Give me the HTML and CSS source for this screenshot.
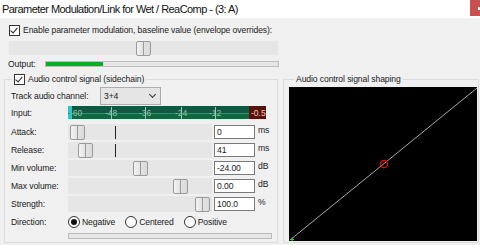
FILE: index.html
```html
<!DOCTYPE html>
<html lang="en">
<head>
    <meta charset="UTF-8">
    <title>Parameter Modulation/Link for Wet / ReaComp - (3: A)</title>
    <link rel="stylesheet" href="styles.css">
</head>
<body>

    <div class="titlebar">
        <span class="title">Parameter Modulation/Link for Wet / ReaComp - (3: A)</span>
        <span class="close"><i></i></span>
    </div>

    <div class="top">
        <label class="check-row">
            <span class="cbox checked"></span>
            Enable parameter modulation, baseline value (envelope overrides):
        </label>
        <div class="hslider big">
            <span class="thumb" style="margin-left: 127px"></span>
        </div>
        <div class="output-row">
            <span>Output:</span>
            <div class="bar"><div class="fill" style="width: 57px"></div></div>
        </div>
    </div>

    <div class="groups">
        <fieldset class="group left">
            <legend>
                <label class="check-row">
                    <span class="cbox checked"></span>
                    Audio control signal (sidechain)
                </label>
            </legend>

            <div class="row channel">
                <span class="lbl">Track audio channel:</span>
                <div class="combo">3+4<span class="chev"></span></div>
            </div>

            <div class="row input">
                <span class="lbl">Input:</span>
                <svg class="meter" width="198" height="13" viewBox="0 0 198 13">
                    <rect x="0" y="0" width="198" height="13" fill="#0b5a42"/>
                    <rect x="0" y="7" width="181" height="6" fill="#0e6a3e"/>
                    <rect x="0" y="0" width="4" height="13" fill="#2fc6c6"/>
                    <rect x="181" y="0" width="17" height="13" fill="#5c1208"/>
                    <line x1="0" y1="7.5" x2="181" y2="7.5" stroke="#3c8c6c" stroke-width="1"/>
                    <g stroke="#9fc9b6" stroke-width="1">
                        <line x1="43.5" y1="1" x2="43.5" y2="13"/>
                        <line x1="77.5" y1="1" x2="77.5" y2="13"/>
                        <line x1="113.5" y1="1" x2="113.5" y2="13"/>
                        <line x1="147.5" y1="1" x2="147.5" y2="13"/>
                    </g>
                    <g class="scale">
                        <text x="2" y="10">-60</text>
                        <text x="37" y="10">-48</text>
                        <text x="71" y="10">-36</text>
                        <text x="107" y="10">-24</text>
                        <text x="141" y="10">-12</text>
                        <text x="183" y="10" class="peak">-0.5</text>
                    </g>
                </svg>
            </div>

            <div class="row slider-row">
                <span class="lbl">Attack:</span>
                <div class="hslider">
                    <span class="thumb" style="margin-left: 2px"></span>
                    <span class="mark"></span>
                </div>
                <div class="edit">0</div>
                <span class="unit">ms</span>
            </div>
            <div class="row slider-row">
                <span class="lbl">Release:</span>
                <div class="hslider">
                    <span class="thumb" style="margin-left: 10px"></span>
                    <span class="mark"></span>
                </div>
                <div class="edit">41</div>
                <span class="unit">ms</span>
            </div>
            <div class="row slider-row">
                <span class="lbl">Min volume:</span>
                <div class="hslider">
                    <span class="thumb" style="margin-left: 65px"></span>
                </div>
                <div class="edit">-24.00</div>
                <span class="unit">dB</span>
            </div>
            <div class="row slider-row">
                <span class="lbl">Max volume:</span>
                <div class="hslider">
                    <span class="thumb" style="margin-left: 105px"></span>
                </div>
                <div class="edit">0.00</div>
                <span class="unit">dB</span>
            </div>
            <div class="row slider-row">
                <span class="lbl">Strength:</span>
                <div class="hslider">
                    <span class="thumb" style="margin-left: 127px"></span>
                </div>
                <div class="edit">100.0</div>
                <span class="unit">%</span>
            </div>

            <div class="row direction">
                <span class="lbl">Direction:</span>
                <label class="radio"><span class="dot on"></span>Negative</label>
                <label class="radio"><span class="dot"></span>Centered</label>
                <label class="radio"><span class="dot"></span>Positive</label>
            </div>

            <div class="bottom-bar"></div>
        </fieldset>

        <fieldset class="group right">
            <legend>Audio control signal shaping</legend>
            <svg class="plot" width="188" height="154" viewBox="0 0 188 154">
                <rect x="0" y="0" width="188" height="154" fill="#000"/>
                <line x1="1" y1="153" x2="188" y2="1" stroke="#a8a8a8" stroke-width="1"/>
                <circle cx="95" cy="77" r="3.5" fill="none" stroke="#e01010" stroke-width="1.3"/>
                <path d="M1 152.5 H5 M3 150.5 V154" stroke="#20e020" stroke-width="1"/>
            </svg>
        </fieldset>
    </div>

</body>
</html>
```

FILE: styles.css
```css
body {
    margin: 0;
    width: 480px;
    height: 245px;
    overflow: hidden;
    background-color: #f0f0f0;
    font-family: "Liberation Sans", Arial, sans-serif;
    font-size: 8.6px;
    letter-spacing: -0.1px;
    color: #1a1a1a;
}
.titlebar {
    height: 18px;
    background-color: #fff;
    display: flex;
    justify-content: space-between;
}
.title {
    font-size: 11px;
    letter-spacing: -0.55px;
    padding: 3px 0 0 2px;
    color: #111;
}
.close {
    width: 10px;
    height: 16px;
    background-color: #c75050;
    display: flex;
    align-items: center;
    justify-content: flex-end;
}
.close i {
    width: 2px;
    height: 3px;
    background-color: #fff;
}
.top {
    width: 269px;
    padding: 6px 0 0 9px;
}
.check-row {
    display: flex;
    align-items: center;
    gap: 3px;
    height: 12px;
    white-space: nowrap;
}
.cbox {
    width: 9px;
    height: 9px;
    border: 1px solid #333;
    background-color: #fff;
    position: relative;
    flex: none;
}
.cbox.checked::after {
    content: "";
    position: absolute;
    left: 1px;
    top: 2px;
    width: 6px;
    height: 3px;
    border-left: 1px solid #222;
    border-bottom: 1px solid #222;
    transform: rotate(-50deg);
    transform-origin: 40% 60%;
}
.hslider {
    height: 16px;
    background-color: #e6e6e6;
    display: flex;
    align-items: center;
    position: relative;
}
.hslider.big {
    margin-top: 5px;
    height: 14px;
}
.thumb {
    width: 13px;
    height: 13px;
    border: 1px solid #9a9a9a;
    border-radius: 2px;
    background: linear-gradient(to right, #f4f4f4 0, #e2e2e2 45%, #9a9a9a 45%, #9a9a9a 55%, #e2e2e2 55%, #dadada 100%);
    flex: none;
}
.mark {
    position: absolute;
    left: 47px;
    top: 2px;
    width: 1px;
    height: 13px;
    background-color: #222;
}
.output-row {
    display: flex;
    align-items: center;
    height: 12px;
    margin-top: 3px;
    margin-left: -1px;
}
.bar {
    margin-left: auto;
    width: 232px;
    height: 4px;
    border: 1px solid #bcbcbc;
    background-color: #e6e6e6;
    margin-right: -1px;
}
.fill {
    height: 100%;
    background-color: #06b025;
}
.groups {
    display: flex;
    margin-top: 3px;
}
.group {
    margin: 0;
    padding: 0;
    min-width: 0;
    border: 1px solid #dcdcdc;
    height: 170px;
}
.group legend {
    padding: 0 2px;
    margin-left: 3px;
    height: 12px;
    line-height: 12px;
}
.group.left {
    margin-left: 4px;
    padding: 2px 0 0 6px;
    box-sizing: border-box;
    width: 274px;
}
.group.left legend {
    margin-left: 1px;
}
.group.right {
    margin-left: 5px;
    width: 196px;
    box-sizing: border-box;
    padding: 2px 0 0 5px;
}
.group.right legend {
    margin-left: 5px;
}
.plot {
    display: block;
}
.row {
    display: flex;
    align-items: center;
}
.lbl {
    width: 57px;
    flex: none;
    white-space: nowrap;
}
.row.channel {
    height: 18px;
}
.combo {
    margin-left: 32px;
    width: 56px;
    height: 16px;
    border: 1px solid #adadad;
    background-color: #e5e5e5;
    display: flex;
    align-items: center;
    padding-left: 3px;
}
.chev {
    margin-left: auto;
    margin-right: 5px;
    width: 4px;
    height: 4px;
    border-right: 1px solid #333;
    border-bottom: 1px solid #333;
    transform: rotate(45deg);
    margin-top: -3px;
}
.row.input {
    height: 13px;
    margin-top: 1px;
}
.meter {
    display: block;
}
.scale text {
    font-family: "Liberation Sans", Arial, sans-serif;
    font-size: 8.5px;
    fill: #8fc4ad;
    letter-spacing: 0;
}
.scale text.peak {
    fill: #f0c8c0;
}
.slider-row {
    height: 16px;
    margin-top: 2px;
}
.row.input + .slider-row {
    margin-top: 5px;
}
.slider-row .hslider {
    width: 144px;
}
.edit {
    margin-left: 2px;
    width: 37px;
    height: 12px;
    border: 1px solid #7a7a7a;
    background-color: #fff;
    padding-left: 2px;
    line-height: 12px;
}
.unit {
    margin-left: 3px;
    align-self: flex-start;
    margin-top: 1px;
}
.row.direction {
    height: 14px;
    margin-top: 3px;
}
.radio {
    display: flex;
    align-items: center;
    gap: 2px;
    margin-right: 10px;
}
.dot {
    width: 10px;
    height: 10px;
    border: 1px solid #333;
    border-radius: 50%;
    background-color: #fff;
    position: relative;
}
.dot.on::after {
    content: "";
    position: absolute;
    left: 2px;
    top: 2px;
    width: 6px;
    height: 6px;
    border-radius: 50%;
    background-color: #111;
}
.bottom-bar {
    margin: 4px 0 0 57px;
    width: 202px;
    height: 4px;
    border: 1px solid #bcbcbc;
    background-color: #e6e6e6;
}
```
